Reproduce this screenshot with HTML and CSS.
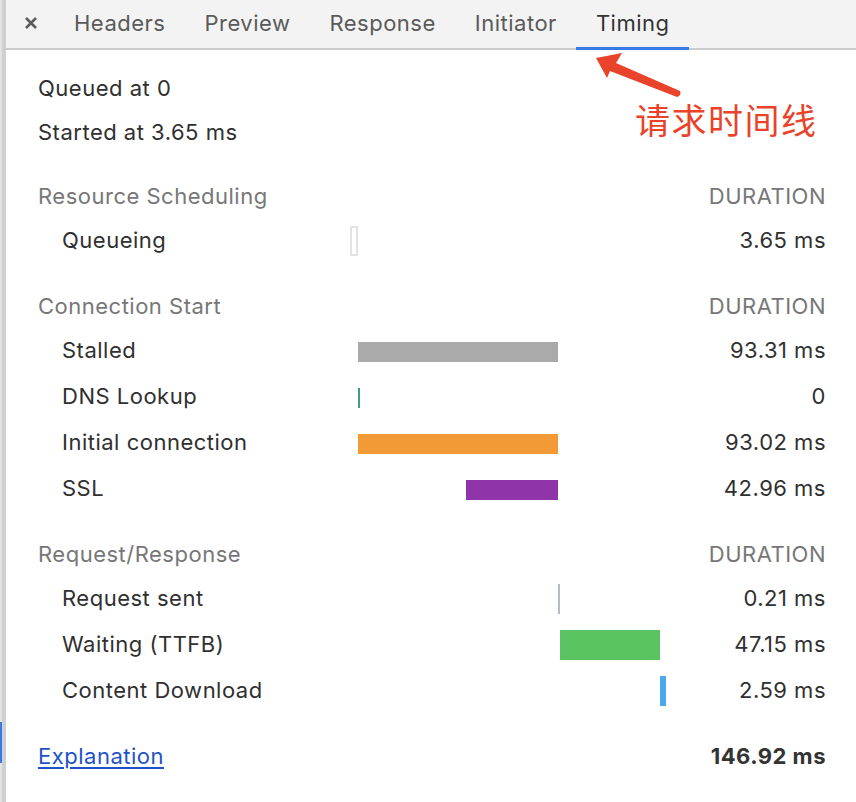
FILE: index.html
```html
<!DOCTYPE html>
<html lang="en">
<head>
<meta charset="utf-8">
<title>Timing</title>
<link rel="stylesheet" href="styles.css">
</head>
<body>
<div class="page">
  <div class="strip"><div class="strip-mark"></div></div>
  <div class="main">
    <div class="tabbar">
      <div class="close">
        <svg width="14" height="14" viewBox="0 0 14 14"><path d="M2 2L12 12M12 2L2 12" stroke="#5c5c5c" stroke-width="2.6" stroke-linecap="butt"/></svg>
      </div>
      <div class="tab">Headers</div>
      <div class="tab">Preview</div>
      <div class="tab">Response</div>
      <div class="tab">Initiator</div>
      <div class="tab active">Timing</div>
    </div>

    <div class="content">
      <div class="info">
        <div class="line">Queued at 0</div>
        <div class="line">Started at 3.65 ms</div>
      </div>

      <div class="section">
        <div class="head"><span>Resource Scheduling</span><span>DURATION</span></div>
        <div class="row">
          <div class="label">Queueing</div>
          <div class="track"><div class="bar tall queue" style="left:0;width:8px"></div></div>
          <div class="value">3.65 ms</div>
        </div>
      </div>

      <div class="section">
        <div class="head"><span>Connection Start</span><span>DURATION</span></div>
        <div class="row">
          <div class="label">Stalled</div>
          <div class="track"><div class="bar short stalled" style="left:8px;width:200px"></div></div>
          <div class="value">93.31 ms</div>
        </div>
        <div class="row">
          <div class="label">DNS Lookup</div>
          <div class="track"><div class="bar short dns" style="left:8px;width:2px"></div></div>
          <div class="value">0</div>
        </div>
        <div class="row">
          <div class="label">Initial connection</div>
          <div class="track"><div class="bar short connect" style="left:8px;width:200px"></div></div>
          <div class="value">93.02 ms</div>
        </div>
        <div class="row">
          <div class="label">SSL</div>
          <div class="track"><div class="bar short ssl" style="left:116px;width:92px"></div></div>
          <div class="value">42.96 ms</div>
        </div>
      </div>

      <div class="section">
        <div class="head"><span>Request/Response</span><span>DURATION</span></div>
        <div class="row">
          <div class="label">Request sent</div>
          <div class="track"><div class="bar tall sent" style="left:208px;width:2px"></div></div>
          <div class="value">0.21 ms</div>
        </div>
        <div class="row">
          <div class="label">Waiting (TTFB)</div>
          <div class="track"><div class="bar tall waiting" style="left:210px;width:100px"></div></div>
          <div class="value">47.15 ms</div>
        </div>
        <div class="row">
          <div class="label">Content Download</div>
          <div class="track"><div class="bar tall download" style="left:310px;width:6px"></div></div>
          <div class="value">2.59 ms</div>
        </div>
      </div>

      <div class="footer">
        <a class="link" href="#">Explanation</a>
        <span class="total">146.92 ms</span>
      </div>
    </div>
  </div>

  <div class="note">
    <svg class="arrow" width="100" height="50" viewBox="590 50 100 50">
      <path d="M596 58 L622 53 L616 63 L680 91 Q682 95 677 97 L610 71 L607 78 Z" fill="#e9432b"/>
    </svg>
    <div class="note-text">请求时间线</div>
  </div>
</div>
</body>
</html>
```

FILE: styles.css
```css
html, body {
  margin: 0;
  padding: 0;
  background: #ffffff;
}

body {
  font-family: Inter, "Noto Sans", "Liberation Sans", sans-serif;
  font-size: 22px;
  letter-spacing: 0.5px;
  color: #303030;
}

.page {
  position: relative;
  display: flex;
  width: 856px;
  height: 802px;
  overflow: hidden;
}

.strip {
  position: relative;
  width: 4px;
  flex: none;
  border-left: 2px solid #e2e2e2;
  background: #cfcfcf;
}

.strip-mark {
  position: absolute;
  left: -2px;
  top: 722px;
  width: 2px;
  height: 41px;
  background: #3b78e7;
}

.main {
  flex: 1;
  display: flex;
  flex-direction: column;
}

.tabbar {
  display: flex;
  align-items: stretch;
  height: 48px;
  background: #f3f3f3;
  border-bottom: 2px solid #cbcbcb;
}

.close {
  width: 14px;
  height: 14px;
  align-self: center;
  margin: 0 16.5px 2px 18px;
  display: flex;
}

.tab {
  position: relative;
  box-sizing: border-box;
  padding: 0 19.5px 3px;
  display: flex;
  align-items: center;
  color: #5a5a5a;
  letter-spacing: 0.5px;
}

.tab.active {
  color: #333333;
}

.tab.active::after {
  content: "";
  position: absolute;
  left: 0;
  right: 0;
  bottom: -2px;
  height: 3px;
  background: #3b78e7;
}

.content {
  padding: 16px 30px 0 32px;
  display: flex;
  flex-direction: column;
}

.line {
  height: 44px;
  line-height: 44px;
}

.section {
  margin-top: 21px;
}

.section + .section {
  margin-top: 22px;
}

.head {
  height: 42px;
  display: flex;
  align-items: center;
  justify-content: space-between;
  color: #777777;
}

.row {
  height: 46px;
  display: flex;
  align-items: center;
}

.label {
  width: 288px;
  padding-left: 24px;
  flex: none;
}

.track {
  position: relative;
  flex: 1;
  align-self: stretch;
}

.bar {
  position: absolute;
}

.bar.tall {
  top: 9px;
  height: 30px;
}

.bar.short {
  top: 15px;
  height: 20px;
}

.queue {
  box-sizing: border-box;
  border: 2px solid #e3e3e3;
}

.stalled { background: #aaaaaa; }
.dns { background: #3f9b8e; }
.connect { background: #f29b36; }
.ssl { background: #8f35a9; }
.sent { background: #b0bec5; }
.waiting { background: #5bc462; }
.download { background: #4aa8ec; }

.value {
  flex: none;
  text-align: right;
}

.footer {
  margin-top: 22px;
  height: 42px;
  display: flex;
  align-items: center;
  justify-content: space-between;
}

.link {
  color: #1f52c9;
  text-decoration: underline;
  text-underline-offset: 3px;
}

.total {
  font-weight: 700;
  color: #333333;
}

.note {
  position: absolute;
  left: 590px;
  top: 50px;
  width: 240px;
  height: 100px;
}

.arrow {
  position: absolute;
  left: 0;
  top: 0;
}

.note-text {
  position: absolute;
  left: 45px;
  top: 47px;
  font-family: "Noto Sans CJK SC", sans-serif;
  font-size: 35px;
  line-height: 44px;
  color: #e9432b;
  letter-spacing: 1.5px;
}
```
